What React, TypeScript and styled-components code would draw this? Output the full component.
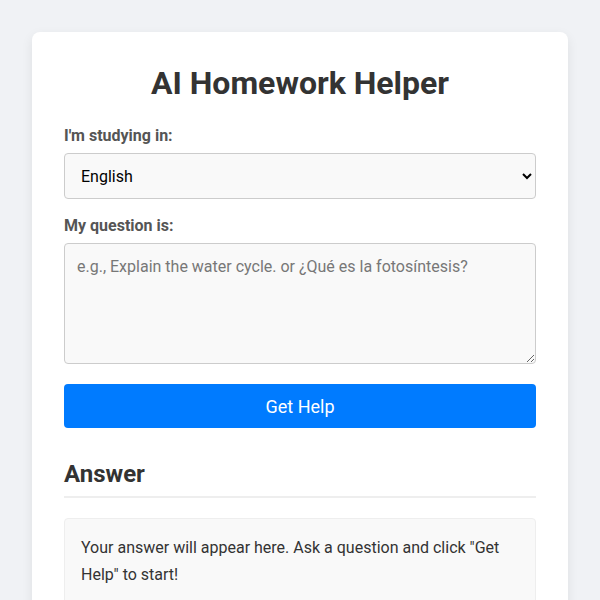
import React, { useState } from "react";
import styled, { createGlobalStyle } from "styled-components";

const GlobalStyle = createGlobalStyle`
  html, body {
    margin: 0;
    padding: 0;
    background: #f0f2f5;
  }
  body {
    font-family: Roboto, "Liberation Sans", sans-serif;
    color: #333;
  }
  * { box-sizing: border-box; }
`;

const Page = styled.div`
  padding: 32px;
  min-height: 600px;
`;

const Card = styled.div`
  background: #fff;
  border-radius: 8px;
  box-shadow: 0 4px 12px rgba(0, 0, 0, 0.08);
  padding: 32px;
  max-width: 600px;
  margin: 0 auto;
`;

const Title = styled.h1`
  margin: 0 0 24px;
  font-size: 32px;
  line-height: normal;
  font-weight: 700;
  text-align: center;
  color: #333;
`;

const Field = styled.div<{ $gap: number }>`
  display: flex;
  flex-direction: column;
  margin-bottom: ${(p) => p.$gap}px;
`;

const Label = styled.label`
  display: block;
  font-size: 16px;
  font-weight: 700;
  line-height: normal;
  color: #555;
  margin-bottom: 8px;
`;

const Select = styled.select`
  width: 100%;
  height: 46px;
  padding: 0 12px;
  font-family: Roboto, "Liberation Sans", sans-serif;
  font-size: 16px;
  color: #000;
  background: #f9f9f9;
  border: 1px solid #ccc;
  border-radius: 4px;
`;

const TextArea = styled.textarea`
  width: 100%;
  height: 121px;
  padding: 12px;
  font-family: Roboto, "Liberation Sans", sans-serif;
  font-size: 16px;
  line-height: 1.4;
  color: #333;
  background: #f9f9f9;
  border: 1px solid #ccc;
  border-radius: 4px;
  resize: vertical;
  display: block;
  &::placeholder {
    color: #777;
  }
`;

const Button = styled.button`
  width: 100%;
  height: 44px;
  border: none;
  border-radius: 4px;
  background: #007bff;
  color: #fff;
  font-family: Roboto, "Liberation Sans", sans-serif;
  font-size: 18px;
  font-weight: 400;
  cursor: pointer;
`;

const SectionTitle = styled.h2`
  margin: 32px 0 20px;
  padding-bottom: 8px;
  font-size: 24px;
  line-height: normal;
  font-weight: 700;
  color: #333;
  border-bottom: 2px solid #eee;
`;

const AnswerBox = styled.div`
  background: #f9f9f9;
  border: 1px solid #eee;
  border-radius: 4px;
  padding: 16px;
  font-size: 16px;
  line-height: 26.7px;
  color: #333;
  min-height: 100px;
`;

export default function App() {
  const [lang, setLang] = useState("English");
  const [q, setQ] = useState("");
  return (
    <>
      <GlobalStyle />
      <Page>
        <Card>
          <Title>AI Homework Helper</Title>
          <Field $gap={17}>
            <Label htmlFor="lang">I'm studying in:</Label>
            <Select id="lang" value={lang} onChange={(e) => setLang(e.target.value)}>
              <option>English</option>
              <option>Español</option>
              <option>Français</option>
            </Select>
          </Field>
          <Field $gap={20}>
            <Label htmlFor="q">My question is:</Label>
            <TextArea
              id="q"
              value={q}
              onChange={(e) => setQ(e.target.value)}
              placeholder="e.g., Explain the water cycle. or ¿Qué es la fotosíntesis?"
            />
          </Field>
          <Button>Get Help</Button>
          <SectionTitle>Answer</SectionTitle>
          <AnswerBox>
            Your answer will appear here. Ask a question and click "Get Help" to start!
          </AnswerBox>
        </Card>
      </Page>
    </>
  );
}
